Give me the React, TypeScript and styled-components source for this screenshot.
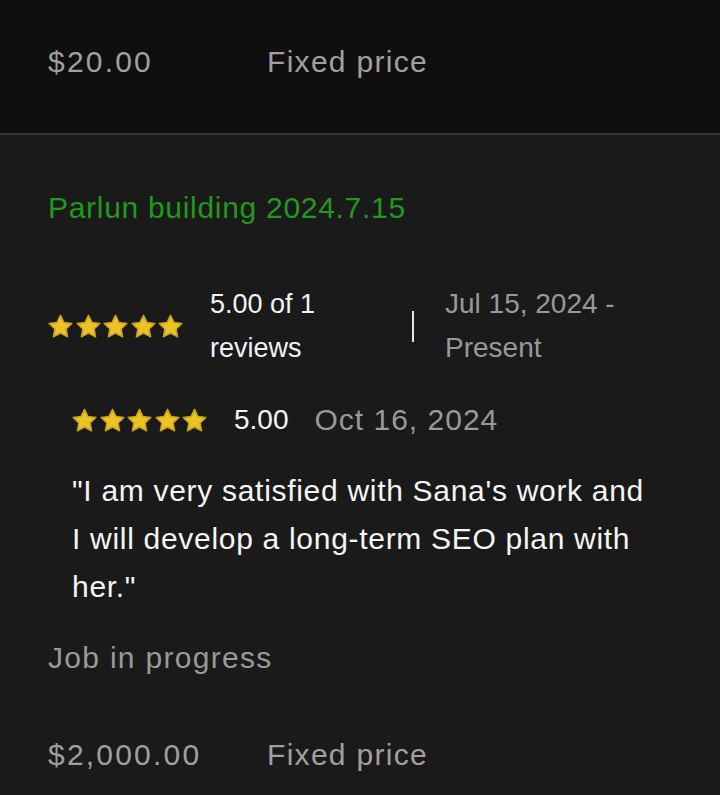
import React from "react";
import styled, { createGlobalStyle } from "styled-components";

const GlobalStyle = createGlobalStyle`
  html, body {
    margin: 0;
    padding: 0;
    background: #1a1a1a;
  }
  body {
    font-family: "Liberation Sans", Arial, Helvetica, sans-serif;
    -webkit-font-smoothing: antialiased;
  }
`;

const Page = styled.div`
  width: 720px;
  min-height: 795px;
  background: #1a1a1a;
  overflow: hidden;
`;

const TopBand = styled.div`
  box-sizing: border-box;
  height: 135px;
  padding: 42px 48px 0;
  background: #0f0f0f;
  border-bottom: 2px solid #333333;
`;

const Section = styled.div`
  padding: 0 48px;
  display: flex;
  flex-direction: column;
`;

const PriceRow = styled.div<{ $mt?: number }>`
  display: flex;
  align-items: center;
  margin-top: ${(p) => p.$mt ?? 0}px;
  height: 40px;
`;

const Amount = styled.span`
  width: 219px;
  flex: 0 0 219px;
  font-size: 30px;
  line-height: 40px;
  letter-spacing: 2.2px;
  color: #a0a0a0;
`;

const PriceType = styled.span`
  font-size: 30px;
  line-height: 40px;
  letter-spacing: 1.3px;
  color: #a0a0a0;
`;

const Title = styled.div`
  margin-top: 53px;
  font-size: 30px;
  line-height: 40px;
  letter-spacing: 0.7px;
  color: #21991d;
`;

const RatingRow = styled.div`
  margin-top: 54px;
  display: flex;
  align-items: center;
`;

const Stars = styled.div`
  display: flex;
  gap: 2.5px;
  flex: 0 0 auto;
`;

const RatingText = styled.div`
  flex: 0 0 170px;
  margin-left: 27px;
  font-size: 27px;
  line-height: 44px;
  color: #f2f2f2;
`;

const Divider = styled.div`
  width: 2px;
  height: 31px;
  background: #e6e6e6;
  margin: 0 31px 0 32px;
  flex: 0 0 2px;
`;

const DateRange = styled.div`
  flex: 1;
  font-size: 28px;
  line-height: 44px;
  color: #999999;
`;

const ReviewRow = styled.div`
  margin-top: 30px;
  padding-left: 24px;
  height: 40px;
  display: flex;
  align-items: center;
`;

const Score = styled.span`
  margin-left: 27px;
  font-size: 28px;
  line-height: 40px;
  color: #f5f5f5;
`;

const ReviewDate = styled.span`
  margin-left: 26px;
  font-size: 30px;
  line-height: 40px;
  letter-spacing: 1px;
  color: #999999;
`;

const Quote = styled.p`
  margin: 27px 0 0;
  padding-left: 24px;
  max-width: 584px;
  font-size: 30px;
  line-height: 48px;
  letter-spacing: 0.7px;
  color: #f5f5f5;
`;

const Status = styled.div`
  margin-top: 27px;
  font-size: 30px;
  line-height: 40px;
  letter-spacing: 1.3px;
  color: #999999;
`;

const StarSvg = styled.svg`
  display: block;
  width: 25px;
  height: 25px;
`;

const Star: React.FC = () => (
  <StarSvg viewBox="1.4 1.2 21.2 21.2">
    <path
      d="M12 2.4l2.95 6.05 6.65.85-4.85 4.65 1.25 6.6L12 17.35l-6 3.2 1.25-6.6-4.85-4.65 6.65-.85z"
      fill="#ecc327"
      stroke="#c9a21c"
      strokeWidth="1.3"
      strokeLinejoin="round"
    />
  </StarSvg>
);

const FiveStars: React.FC = () => (
  <Stars>
    {[0, 1, 2, 3, 4].map((i) => (
      <Star key={i} />
    ))}
  </Stars>
);

export default function App() {
  return (
    <Page>
      <GlobalStyle />
      <TopBand>
        <PriceRow>
          <Amount>$20.00</Amount>
          <PriceType>Fixed price</PriceType>
        </PriceRow>
      </TopBand>
      <Section>
        <Title>Parlun building 2024.7.15</Title>
        <RatingRow>
          <FiveStars />
          <RatingText>5.00 of 1 reviews</RatingText>
          <Divider />
          <DateRange>Jul 15, 2024 - Present</DateRange>
        </RatingRow>
        <ReviewRow>
          <FiveStars />
          <Score>5.00</Score>
          <ReviewDate>Oct 16, 2024</ReviewDate>
        </ReviewRow>
        <Quote>"I am very satisfied with Sana's work and I will develop a long-term SEO plan with her."</Quote>
        <Status>Job in progress</Status>
        <PriceRow $mt={57}>
          <Amount>$2,000.00</Amount>
          <PriceType>Fixed price</PriceType>
        </PriceRow>
      </Section>
    </Page>
  );
}
